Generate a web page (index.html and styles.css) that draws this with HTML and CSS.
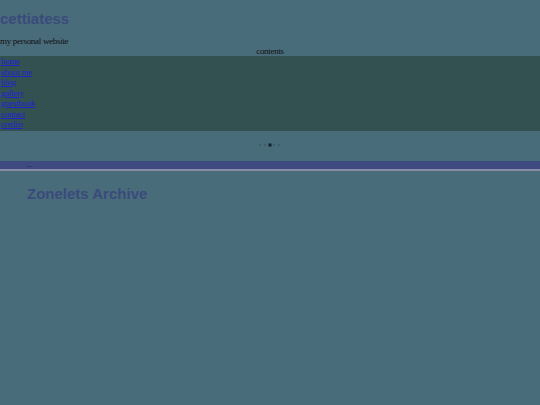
FILE: index.html
```html
<!DOCTYPE html>
<html>
<head>
<meta charset="utf-8">
<title>cettiatess</title>
<link rel="stylesheet" href="styles.css">
</head>
<body>
<header class="site-header">
  <h1 class="site-title">cettiatess</h1>
  <p class="tagline">my personal website</p>
  <div class="contents-label">contents</div>
</header>
<nav class="site-nav">
  <a href="#">home</a>
  <a href="#">about me</a>
  <a href="#">blog</a>
  <a href="#">gallery</a>
  <a href="#">guestbook</a>
  <a href="#">contact</a>
  <a href="#">credits</a>
</nav>
<div class="divider">
  <svg class="divider-dots" width="24" height="6" viewBox="0 0 24 6">
    <rect x="1.5" y="2.5" width="1" height="1" fill="#1c3040"/>
    <rect x="6.5" y="2.5" width="1" height="1" fill="#1c3040"/>
    <rect x="10.5" y="1.5" width="3" height="3" fill="#10202a"/>
    <rect x="15.5" y="2.5" width="1" height="1" fill="#1c3040"/>
    <rect x="20.5" y="2.5" width="1" height="1" fill="#1c3040"/>
  </svg>
</div>
<div class="top-bar"><span class="bar-text">archive</span></div>
<main class="main">
  <h2 class="page-title">Zonelets Archive</h2>
</main>
</body>
</html>
```

FILE: styles.css
```css
html, body {
  margin: 0;
  padding: 0;
}
body {
  background: #486c7a;
  font-family: "Liberation Serif", "Times New Roman", serif;
  font-size: 9px;
  letter-spacing: -0.3px;
  line-height: 10.5px;
  color: #111;
  min-height: 405px;
}
.site-header {
  padding: 10px 0 0 0;
}
.site-title {
  font-family: "Liberation Sans", Arial, sans-serif;
  font-size: 15px;
  line-height: 17px;
  font-weight: bold;
  letter-spacing: 0;
  color: #3b4a7c;
  margin: 0 0 8.5px 0;
}
.tagline {
  margin: 0;
  line-height: 10px;
}
.contents-label {
  text-align: center;
  line-height: 10px;
  margin-top: 0.5px;
}
.site-nav {
  background: #335150;
  display: flex;
  flex-direction: column;
  padding: 0 0 1px 1px;
}
.site-nav a {
  color: #1f24d0;
  text-decoration: underline;
  line-height: 10.5px;
  align-self: flex-start;
}
.divider {
  display: flex;
  justify-content: center;
  padding: 11px 0 0 0;
  height: 19px;
}
.divider-dots {
  display: block;
}
.top-bar {
  background: #3e4a80;
  height: 8px;
  border-bottom: 2px solid #878ea3;
  padding-left: 27px;
  display: flex;
  align-items: flex-end;
}
.bar-text {
  font-size: 2px;
  line-height: 3px;
  letter-spacing: 0;
  color: #111a30;
  margin-bottom: 1px;
}
.main {
  padding: 14px 27px 0 27px;
}
.page-title {
  font-family: "Liberation Sans", Arial, sans-serif;
  font-size: 15px;
  line-height: 17px;
  font-weight: bold;
  letter-spacing: 0;
  color: #3b4a7c;
  margin: 0;
}
```
